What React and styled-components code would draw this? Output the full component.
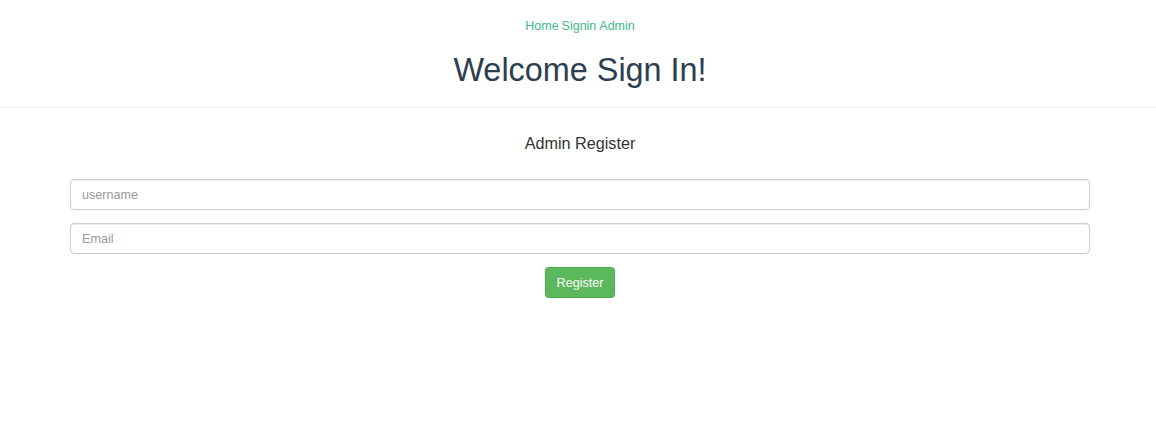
import React, { useState } from "react";
import styled, { createGlobalStyle } from "styled-components";

const GlobalStyle = createGlobalStyle`
  html, body {
    margin: 0;
    padding: 0;
    background: #fff;
  }
  body {
    font-family: "Liberation Sans", Arial, Helvetica, sans-serif;
    font-size: 12.6px;
    color: #333;
  }
  * {
    box-sizing: border-box;
  }
`;

const Page = styled.div`
  padding-left: 4px;
  width: 1156px;
  min-height: 442px;
`;

const Nav = styled.nav`
  display: flex;
  justify-content: center;
  gap: 3px;
  padding-top: 18px;
  font-size: 12.5px;
  line-height: 17px;
`;

const NavLink = styled.a`
  color: #42b983;
  text-decoration: none;
  cursor: pointer;
`;

const Title = styled.h1`
  margin: 17px 0 0;
  text-align: center;
  font-size: 32.4px;
  font-weight: 400;
  line-height: 36px;
  color: #2c3e50;
`;

const Divider = styled.hr`
  margin: 19px 0 0 -4px;
  border: 0;
  border-top: 1px solid #eee;
`;

const Form = styled.form`
  display: flex;
  flex-direction: column;
  align-items: center;
  padding: 0 66px;
`;

const Subtitle = styled.h4`
  margin: 25px 0 0;
  font-size: 16.2px;
  font-weight: 400;
  line-height: 20px;
  color: #333;
`;

const Fields = styled.div`
  width: 100%;
  display: flex;
  flex-direction: column;
  gap: 13px;
  margin-top: 26px;
`;

const Input = styled.input`
  width: 100%;
  height: 31px;
  padding: 5px 11px;
  font-family: inherit;
  font-size: 12.6px;
  color: #555;
  border: 1px solid #ccc;
  border-radius: 4px;
  box-shadow: inset 0 1px 1px rgba(0, 0, 0, 0.075);
  outline: none;

  &::placeholder {
    color: #999;
  }
`;

const Button = styled.button`
  margin-top: 13px;
  height: 31px;
  padding: 5px 10.5px;
  font-family: inherit;
  font-size: 12.6px;
  color: #fff;
  background: #5cb85c;
  border: 1px solid #4cae4c;
  border-radius: 3.6px;
  cursor: pointer;
`;

export default function App() {
  const [username, setUsername] = useState("");
  const [email, setEmail] = useState("");

  return (
    <Page>
      <GlobalStyle />
      <Nav>
        <NavLink>Home</NavLink>
        <NavLink>Signin</NavLink>
        <NavLink>Admin</NavLink>
      </Nav>
      <Title>Welcome Sign In!</Title>
      <Divider />
      <Form onSubmit={(e) => e.preventDefault()}>
        <Subtitle>Admin Register</Subtitle>
        <Fields>
          <Input
            placeholder="username"
            value={username}
            onChange={(e) => setUsername(e.target.value)}
          />
          <Input
            placeholder="Email"
            value={email}
            onChange={(e) => setEmail(e.target.value)}
          />
        </Fields>
        <Button type="submit">Register</Button>
      </Form>
    </Page>
  );
}
